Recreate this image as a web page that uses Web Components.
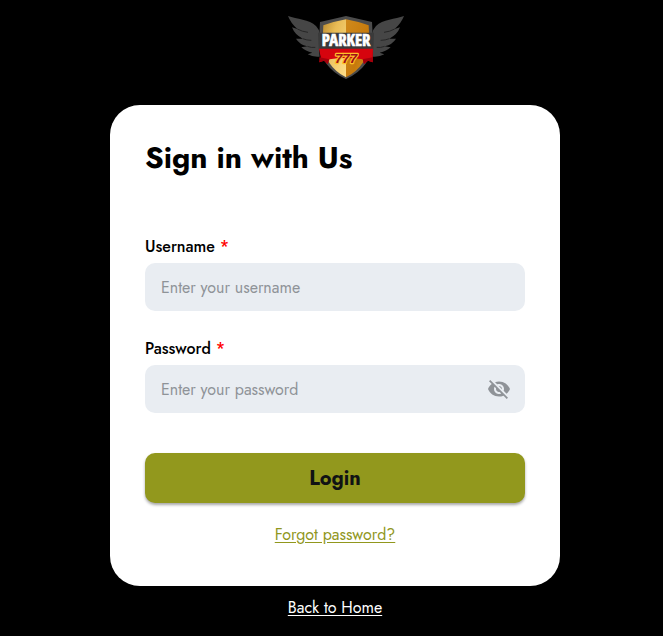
<!DOCTYPE html>
<html lang="en">
<head>
<meta charset="utf-8">
<meta name="viewport" content="width=device-width, initial-scale=1">
<title>Sign in</title>
<style>
    body{
        margin: 0;
        background: #000;
        font-family: Jost, Lato, sans-serif;
        font-size: 16px;
        line-height: 24px;
    }
</style>
</head>
<body>

<login-page>
    <brand-logo slot="logo"></brand-logo>
    <login-card titulo="Sign in with Us">
        <form-field label="Username" type="text" placeholder="Enter your username"></form-field>
        <form-field label="Password" type="password" placeholder="Enter your password"></form-field>
        <login-button slot="actions">Login</login-button>
        <text-link slot="actions" href="#forgot" color="#91971d">Forgot password?</text-link>
    </login-card>
    <text-link slot="footer" href="#home" color="#fff">Back to Home</text-link>
</login-page>

<script>
class LoginPage extends HTMLElement{

    constructor(){
        super();
        this.attachShadow({ mode: "open" });
    }
    connectedCallback(){
        this.shadowRoot.innerHTML = `
        <style>
        :host{
            display: block;
            padding: 12px 0 16px 7px;
        }
        main{
            display: flex;
            flex-direction: column;
            align-items: center;
        }
        header{
            margin-bottom: 23px;
        }
        footer{
            margin-top: 10px;
        }
        </style>
        <main>
            <header><slot name="logo"></slot></header>
            <slot></slot>
            <footer><slot name="footer"></slot></footer>
        </main>
        `;
    }
}

class BrandLogo extends HTMLElement{

    constructor(){
        super();
        this.attachShadow({ mode: "open" });
    }
    connectedCallback(){
        this.shadowRoot.innerHTML = `
        <style>
        :host{
            display: block;
        }
        svg{
            display: block;
            width: 138px;
            height: 70px;
        }
        .name{
            font: bold 50px "Liberation Sans Narrow", "Open Sans Condensed", "Liberation Sans", sans-serif;
        }
        .seven{
            font: italic bold 40px "Liberation Sans", sans-serif;
        }
        </style>
        <svg viewBox="-42 12 414 210" role="img" aria-label="Parker 777">
            <defs>
                <linearGradient id="izq" x1="0" y1="0" x2="1" y2="1">
                    <stop offset="0" stop-color="#b98a2e"/>
                    <stop offset=".35" stop-color="#e8bb55"/>
                    <stop offset="1" stop-color="#ffe08c"/>
                </linearGradient>
                <linearGradient id="der" x1="0" y1="0" x2="1" y2="1">
                    <stop offset="0" stop-color="#d08a1c"/>
                    <stop offset=".6" stop-color="#c67a0c"/>
                    <stop offset="1" stop-color="#e09c28"/>
                </linearGradient>
                <g id="wing">
                    <path d="M24 24C50 34 88 34 108 54Q118 64 119 78L117 122 119 146Q98 148 83 139L97 134Q76 130 64 118L82 115Q58 109 48 92L68 92Q44 80 36 58L52 63Q32 45 24 24Z" fill="#464646"/>
                    <path d="M52 63Q66 71 84 73M68 92Q80 97 94 97M82 115Q94 120 106 118" fill="none" stroke="#262626" stroke-width="3"/>
                </g>
            </defs>
            <use href="#wing"/>
            <use href="#wing" transform="translate(396 0) scale(-1 1)"/>
            <path d="M198 24Q232 32 276 42L279 98Q275 178 198 213Q121 178 117 98L120 42Q164 32 198 24Z" fill="#4c4c4c"/>
            <path d="M198 34Q164 40 130 52L128 98Q132 174 198 208Z" fill="url(#izq)"/>
            <path d="M198 34Q232 40 266 52L268 98Q264 174 198 208Z" fill="url(#der)"/>
            <path d="M114 74H282L280 124H116Z" fill="#3a3a3a"/>
            <path d="M117 122H279L278 163 264 158 252 168 248 154Q198 146 148 154L143 168 132 158 118 163 122 148Z" fill="#d6040e"/>
            <path d="M118 148L148 154 143 168 132 158 118 163ZM278 148L248 154 252 168 264 158 278 163Z" fill="#a4000c"/>
            <text class="name" x="198" y="115" text-anchor="middle" fill="#fff" stroke="#fff" stroke-width="2">PARKER</text>
            <text class="seven" x="198" y="165" text-anchor="middle" fill="#a00f18" stroke="#ffc02a" stroke-width="7" paint-order="stroke" stroke-linejoin="round">777</text>
        </svg>
        `;
    }
}

class LoginCard extends HTMLElement{

    constructor(){
        super();
        this.attachShadow({ mode: "open" });
    }
    connectedCallback(){
        this.shadowRoot.innerHTML = `
        <style>
        :host{
            display: block;
            box-sizing: border-box;
            width: 100%;
            max-width: 450px;
            padding: 35px 35px 39px;
            border-radius: 30px;
            background: #fff;
            color: #000;
        }
        h1{
            margin: 0 0 60px;
            font-size: 30px;
            line-height: 35px;
            font-weight: bold;
        }
        .fields{
            display: grid;
            gap: 26px;
        }
        .actions{
            display: flex;
            flex-direction: column;
            align-items: center;
            gap: 20px;
            margin-top: 40px;
        }
        </style>
        <h1>${this.getAttribute("titulo")}</h1>
        <div class="fields"><slot></slot></div>
        <div class="actions"><slot name="actions"></slot></div>
        `;
    }
}

class FormField extends HTMLElement{

    constructor(){
        super();
        this.attachShadow({ mode: "open" });
    }
    connectedCallback(){
        let type = this.getAttribute("type");
        let toggle = `
            <button type="button" aria-label="Show password">
                <svg viewBox="0 0 24 24" aria-hidden="true"><path d="M12 7c2.76 0 5 2.24 5 5 0 .65-.13 1.26-.36 1.83l2.92 2.92c1.51-1.26 2.7-2.89 3.43-4.75-1.73-4.39-6-7.5-11-7.5-1.4 0-2.74.25-3.98.7l2.16 2.16C10.74 7.13 11.35 7 12 7zM2 4.27l2.28 2.28.46.46C3.08 8.3 1.78 10.02 1 12c1.73 4.39 6 7.5 11 7.5 1.55 0 3.03-.3 4.38-.84l.42.42L19.73 22 21 20.73 3.27 3 2 4.27zM7.53 9.8l1.55 1.55c-.05.21-.08.43-.08.65 0 1.66 1.34 3 3 3 .22 0 .44-.03.65-.08l1.55 1.55c-.67.33-1.41.53-2.2.53-2.76 0-5-2.24-5-5 0-.79.2-1.53.53-2.2zm4.31-.78l3.15 3.15.02-.16c0-1.66-1.34-3-3-3l-.17.01z"/></svg>
            </button>`;

        this.shadowRoot.innerHTML = `
        <style>
        :host{
            display: grid;
            gap: 4px;
        }
        label{
            font-weight: 500;
        }
        label span{
            color: #f00;
        }
        .box{
            display: flex;
            align-items: center;
            height: 48px;
            border-radius: 10px;
            background: #e9edf2;
        }
        .box:focus-within{
            outline: 2px solid #91971d;
        }
        input{
            flex: 1;
            min-width: 0;
            height: 100%;
            box-sizing: border-box;
            padding: 0 16px;
            border: 0;
            outline: 0;
            background: none;
            font: inherit;
            color: #000;
        }
        input::placeholder{
            color: #8f9398;
            opacity: 1;
        }
        button{
            margin: 0 14px 0 0;
            padding: 0;
            border: 0;
            background: none;
            cursor: pointer;
        }
        svg{
            display: block;
            width: 24px;
            height: 24px;
            fill: #8f9398;
        }
        </style>
        <label for="campo">${this.getAttribute("label")} <span>*</span></label>
        <div class="box">
            <input id="campo" type="${type}" placeholder="${this.getAttribute("placeholder")}" required>
            ${type == "password" ? toggle : ""}
        </div>
        `;

        let button = this.shadowRoot.querySelector("button");
        if(button){
            button.addEventListener("click", () => {
                let input = this.shadowRoot.querySelector("input");
                input.type = input.type == "password" ? "text" : "password";
            });
        }
    }
}

class LoginButton extends HTMLElement{

    constructor(){
        super();
        this.attachShadow({ mode: "open" });
    }
    connectedCallback(){
        this.shadowRoot.innerHTML = `
        <style>
        :host{
            display: block;
            width: 100%;
        }
        button{
            display: block;
            width: 100%;
            height: 50px;
            padding: 0;
            border: 0;
            border-radius: 10px;
            background: #92981d;
            box-shadow: 0 2px 3px rgba(0, 0, 0, .35);
            color: #101214;
            font-family: inherit;
            font-size: 20px;
            font-weight: bold;
            cursor: pointer;
        }
        </style>
        <button type="submit"><slot></slot></button>
        `;
    }
}

class TextLink extends HTMLElement{

    constructor(){
        super();
        this.attachShadow({ mode: "open" });
    }
    connectedCallback(){
        this.shadowRoot.innerHTML = `
        <style>
        :host{
            display: block;
        }
        a{
            color: ${this.getAttribute("color")};
            text-decoration: underline;
            text-underline-offset: 2px;
        }
        </style>
        <a href="${this.getAttribute("href")}"><slot></slot></a>
        `;
    }
}

window.customElements.define("login-page", LoginPage);
window.customElements.define("brand-logo", BrandLogo);
window.customElements.define("login-card", LoginCard);
window.customElements.define("form-field", FormField);
window.customElements.define("login-button", LoginButton);
window.customElements.define("text-link", TextLink);
</script>
</body>
</html>
